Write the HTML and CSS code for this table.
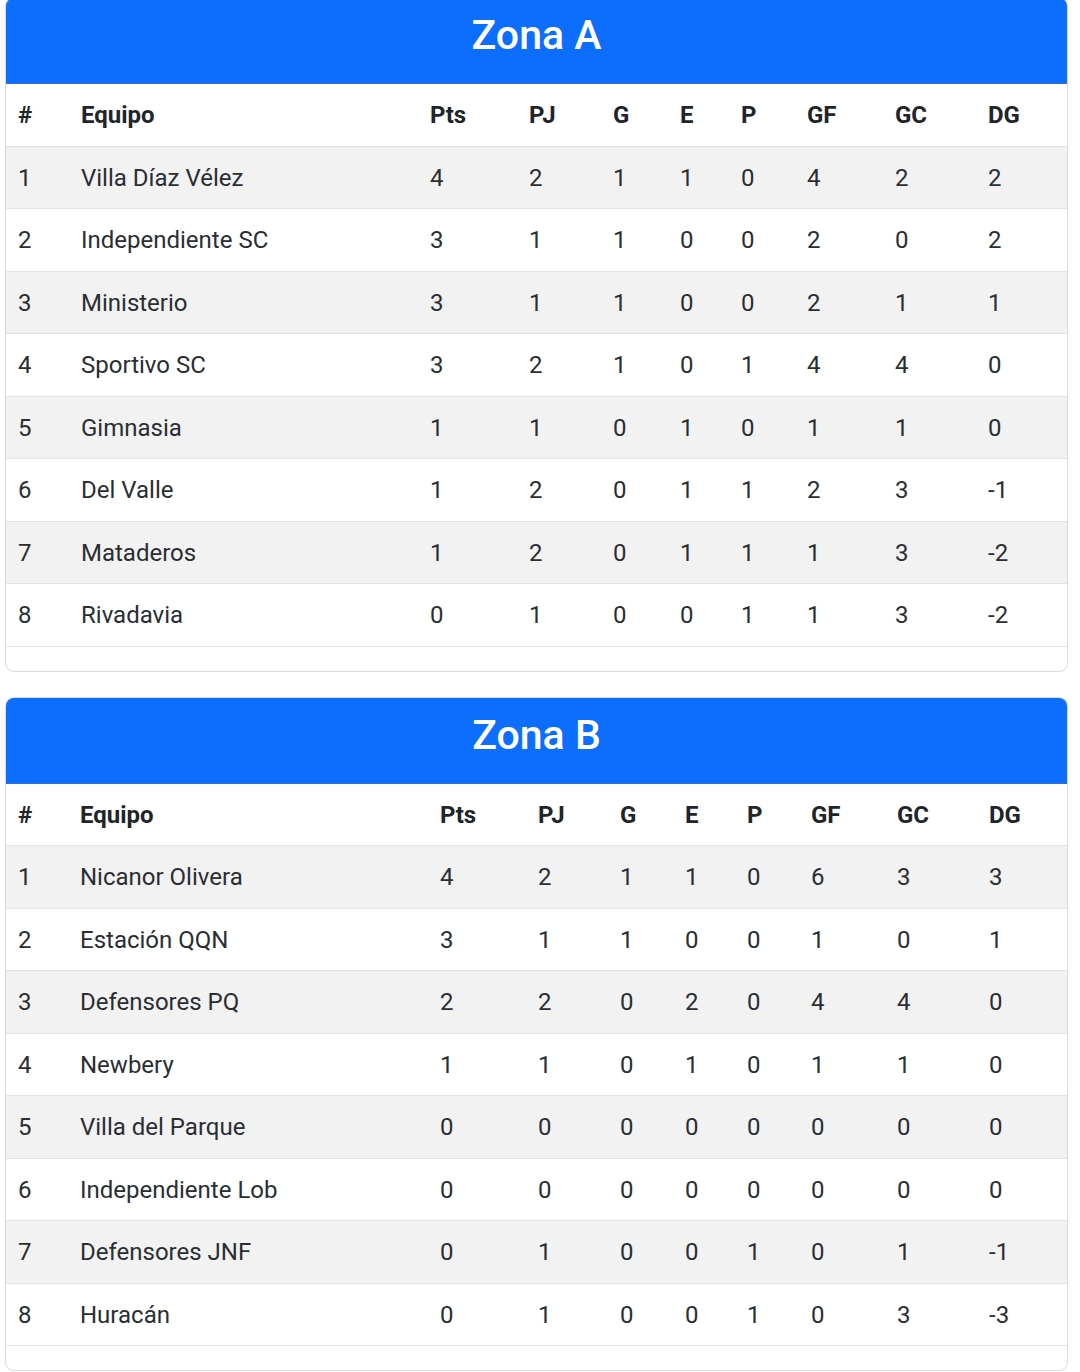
FILE: index.html
```html
<!DOCTYPE html>
<html lang="es">
<head>
<meta charset="utf-8">
<title>Zonas</title>
<link rel="stylesheet" href="styles.css">
</head>
<body>
<main class="page">
  <section class="card card-first">
    <header class="card-header"><h2 class="card-title">Zona A</h2></header>
    <table class="standings zone-a">
      <colgroup>
        <col class="c-pos"><col class="c-team"><col class="c-pts"><col class="c-pj"><col class="c-g"><col class="c-e"><col class="c-p"><col class="c-gf"><col class="c-gc"><col class="c-dg">
      </colgroup>
      <thead>
        <tr><th>#</th><th>Equipo</th><th>Pts</th><th>PJ</th><th>G</th><th>E</th><th>P</th><th>GF</th><th>GC</th><th>DG</th></tr>
      </thead>
      <tbody>
        <tr><td>1</td><td>Villa Díaz Vélez</td><td>4</td><td>2</td><td>1</td><td>1</td><td>0</td><td>4</td><td>2</td><td>2</td></tr>
        <tr><td>2</td><td>Independiente SC</td><td>3</td><td>1</td><td>1</td><td>0</td><td>0</td><td>2</td><td>0</td><td>2</td></tr>
        <tr><td>3</td><td>Ministerio</td><td>3</td><td>1</td><td>1</td><td>0</td><td>0</td><td>2</td><td>1</td><td>1</td></tr>
        <tr><td>4</td><td>Sportivo SC</td><td>3</td><td>2</td><td>1</td><td>0</td><td>1</td><td>4</td><td>4</td><td>0</td></tr>
        <tr><td>5</td><td>Gimnasia</td><td>1</td><td>1</td><td>0</td><td>1</td><td>0</td><td>1</td><td>1</td><td>0</td></tr>
        <tr><td>6</td><td>Del Valle</td><td>1</td><td>2</td><td>0</td><td>1</td><td>1</td><td>2</td><td>3</td><td>-1</td></tr>
        <tr><td>7</td><td>Mataderos</td><td>1</td><td>2</td><td>0</td><td>1</td><td>1</td><td>1</td><td>3</td><td>-2</td></tr>
        <tr><td>8</td><td>Rivadavia</td><td>0</td><td>1</td><td>0</td><td>0</td><td>1</td><td>1</td><td>3</td><td>-2</td></tr>
      </tbody>
    </table>
  </section>

  <section class="card">
    <header class="card-header"><h2 class="card-title">Zona B</h2></header>
    <table class="standings zone-b">
      <colgroup>
        <col class="c-pos"><col class="c-team"><col class="c-pts"><col class="c-pj"><col class="c-g"><col class="c-e"><col class="c-p"><col class="c-gf"><col class="c-gc"><col class="c-dg">
      </colgroup>
      <thead>
        <tr><th>#</th><th>Equipo</th><th>Pts</th><th>PJ</th><th>G</th><th>E</th><th>P</th><th>GF</th><th>GC</th><th>DG</th></tr>
      </thead>
      <tbody>
        <tr><td>1</td><td>Nicanor Olivera</td><td>4</td><td>2</td><td>1</td><td>1</td><td>0</td><td>6</td><td>3</td><td>3</td></tr>
        <tr><td>2</td><td>Estación QQN</td><td>3</td><td>1</td><td>1</td><td>0</td><td>0</td><td>1</td><td>0</td><td>1</td></tr>
        <tr><td>3</td><td>Defensores PQ</td><td>2</td><td>2</td><td>0</td><td>2</td><td>0</td><td>4</td><td>4</td><td>0</td></tr>
        <tr><td>4</td><td>Newbery</td><td>1</td><td>1</td><td>0</td><td>1</td><td>0</td><td>1</td><td>1</td><td>0</td></tr>
        <tr><td>5</td><td>Villa del Parque</td><td>0</td><td>0</td><td>0</td><td>0</td><td>0</td><td>0</td><td>0</td><td>0</td></tr>
        <tr><td>6</td><td>Independiente Lob</td><td>0</td><td>0</td><td>0</td><td>0</td><td>0</td><td>0</td><td>0</td><td>0</td></tr>
        <tr><td>7</td><td>Defensores JNF</td><td>0</td><td>1</td><td>0</td><td>0</td><td>1</td><td>0</td><td>1</td><td>-1</td></tr>
        <tr><td>8</td><td>Huracán</td><td>0</td><td>1</td><td>0</td><td>0</td><td>1</td><td>0</td><td>3</td><td>-3</td></tr>
      </tbody>
    </table>
  </section>
</main>
</body>
</html>
```

FILE: styles.css
```css
* { box-sizing: border-box; }

html, body {
  margin: 0;
  padding: 0;
  background: #ffffff;
}

body {
  font-family: Roboto, "Liberation Sans", Arial, sans-serif;
  color: #212529;
  font-size: 24px;
}

.page {
  display: flex;
  flex-direction: column;
  gap: 25px;
  padding: 0 12px 0 5px;
}

.card {
  border: 1px solid #dadada;
  border-radius: 9px;
  overflow: hidden;
  background: #fff;
}

.card-first {
  margin-top: -3px;
}

.card-header {
  background: #0d6efd;
  color: #fff;
  text-align: center;
  padding: 12px 0 23px;
  border-bottom: 1px solid #2f6fd0;
}

.card-title {
  margin: 0;
  font-size: 41px;
  font-weight: 500;
  line-height: 50px;
}

.standings {
  width: 100%;
  border-collapse: collapse;
  table-layout: fixed;
  margin-bottom: 24px;
}

.standings th,
.standings td {
  text-align: left;
  padding: 13.25px 0 11.25px 12px;
  line-height: 37px;
  border-bottom: 1px solid #e3e3e3;
  white-space: nowrap;
}

.standings th {
  font-weight: 700;
}

.standings td {
  font-weight: 400;
  color: #2a2e33;
}

.standings tbody tr:nth-child(odd) td {
  background: #f2f2f2;
}

/* Zona A column widths */
.zone-a .c-pos { width: 63px; }
.zone-a .c-team { width: 349px; }
.zone-a .c-pts { width: 99px; }
.zone-a .c-pj { width: 84px; }
.zone-a .c-g { width: 67px; }
.zone-a .c-e { width: 61px; }
.zone-a .c-p { width: 66px; }
.zone-a .c-gf { width: 88px; }
.zone-a .c-gc { width: 93px; }
.zone-a .c-dg { width: 91px; }

/* Zona B column widths */
.zone-b .c-pos { width: 62px; }
.zone-b .c-team { width: 360px; }
.zone-b .c-pts { width: 98px; }
.zone-b .c-pj { width: 82px; }
.zone-b .c-g { width: 65px; }
.zone-b .c-e { width: 62px; }
.zone-b .c-p { width: 64px; }
.zone-b .c-gf { width: 86px; }
.zone-b .c-gc { width: 92px; }
.zone-b .c-dg { width: 90px; }
```
